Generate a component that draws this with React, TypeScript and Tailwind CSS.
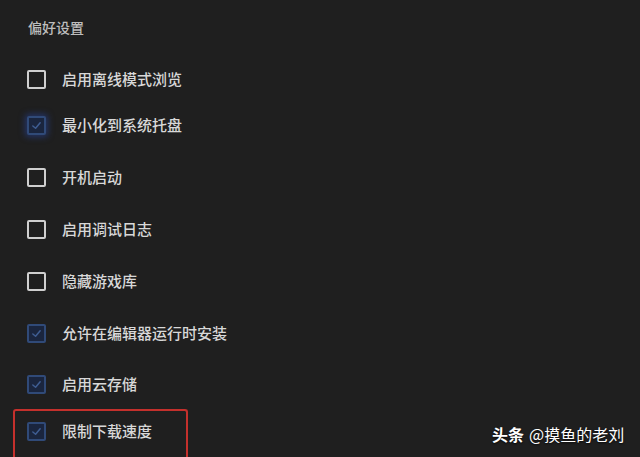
import React from 'react';

const items: { label: string; checked: boolean; h: string }[] = [
  { label: '启用离线模式浏览', checked: false, h: 'h-[40px]' },
  { label: '最小化到系统托盘', checked: true, h: 'h-[52px]' },
  { label: '开机启动', checked: false, h: 'h-[52px]' },
  { label: '启用调试日志', checked: false, h: 'h-[52px]' },
  { label: '隐藏游戏库', checked: false, h: 'h-[52px]' },
  { label: '允许在编辑器运行时安装', checked: true, h: 'h-[52px]' },
  { label: '启用云存储', checked: true, h: 'h-[50px]' },
];

function Box({ checked, glow }: { checked: boolean; glow?: boolean }) {
  if (!checked) {
    return <div className="w-[19px] h-[19px] shrink-0 rounded-[2px] border-2 border-[#cfcfcf]" />;
  }
  return (
    <div
      className={`w-[19px] h-[19px] shrink-0 rounded-[2px] border-2 border-[#304a78] bg-[#1a253e] flex items-center justify-center ${
        glow ? 'shadow-[0_0_6px_2px_rgba(40,70,160,0.55)]' : ''
      }`}
    >
      <svg width="11" height="11" viewBox="0 0 12 12" fill="none">
        <path d="M2 6.5 L5 9 L10 3" stroke="#3f5d92" strokeWidth="1.6" strokeLinecap="round" strokeLinejoin="round" />
      </svg>
    </div>
  );
}

export default function App() {
  return (
    <div
      className="relative w-[640px] h-[457px] overflow-hidden bg-[#1f1f1f]"
      style={{ fontFamily: '"Noto Sans CJK SC", "Noto Sans", sans-serif' }}
    >
      <div className="pt-[17px] pl-[28px] text-[14px] leading-[20px] font-medium text-[#bdbdbd]">偏好设置</div>

      <div className="mt-[22px] flex flex-col">
        {items.map((it, i) => (
          <div key={it.label} className={`${it.h} flex items-center pl-[27px] gap-[16px]`}>
            <Box checked={it.checked} glow={i === 1} />
            <span className="text-[15px] font-medium text-[#d8d8d8]">{it.label}</span>
          </div>
        ))}

        <div className="ml-[13px] w-[175px] h-[80px] border-2 border-b-0 border-[#c4302c] rounded-[3px] pl-[12px] pt-[10px]">
          <div className="flex items-center gap-[16px] h-[20px]">
            <Box checked />
            <span className="text-[15px] font-medium text-[#d8d8d8]">限制下载速度</span>
          </div>
        </div>
      </div>

      {/* watermark */}
      <div className="absolute left-[492px] top-[424px] flex items-center gap-[5px] text-white text-[16px] leading-[20px] [text-shadow:0_1px_2px_rgba(0,0,0,0.8)]">
        <span className="font-bold">头条</span>
        <span>@摸鱼的老刘</span>
      </div>
    </div>
  );
}
